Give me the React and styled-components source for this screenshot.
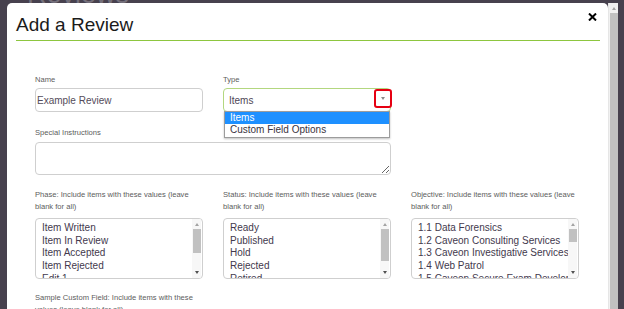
import React from "react";
import styled, { createGlobalStyle } from "styled-components";

const Global = createGlobalStyle`
  html, body { margin: 0; padding: 0; background: #47414e; }
  body { font-family: "Liberation Sans", Arial, sans-serif; }
  * { box-sizing: border-box; }
`;

const Page = styled.div`
  position: relative;
  width: 624px;
  height: 309px;
  overflow: hidden;
  background: #47414e;
`;

const BackdropTitle = styled.h1`
  margin: -21px 0 0 27px;
  font: 400 27px/30px "Liberation Sans", Arial, sans-serif;
  color: #75707b;
`;

const Overlay = styled.div`
  position: absolute;
  inset: 0;
  display: flex;
  align-items: stretch;
  padding: 3px 6px 0 7px;
`;

const Modal = styled.div`
  width: 601px;
  background: #fff;
  border-radius: 5px 5px 0 0;
`;

const PageScroll = styled.div`
  width: 10px;
  background: #f1f1f1;
  border-left: 1px solid #e6e6e6;
  display: flex;
  flex-direction: column;
  align-items: center;
`;

const ScrollBtn = styled.div`
  height: ${(p) => p.$h}px;
  width: 100%;
  display: flex;
  align-items: center;
  justify-content: center;
  flex: none;
`;

const Arrow = styled.span`
  width: 0;
  height: 0;
  border-left: 2.5px solid transparent;
  border-right: 2.5px solid transparent;
  ${(p) =>
    p.$down
      ? "border-top: 3px solid #505050;"
      : "border-bottom: 3px solid #a3a3a3;"}
`;

const Thumb = styled.div`
  width: 8px;
  background: #c1c1c1;
  flex: ${(p) => (p.$fill ? "1" : "none")};
`;

const Header = styled.div`
  margin: 0 8px 0 9px;
  padding: 11px 0 4px;
  border-bottom: 1px solid #8dc63f;
  display: flex;
  justify-content: space-between;
  align-items: flex-start;
`;

const Title = styled.h2`
  margin: 0;
  font: 400 19px/22px "Liberation Sans", Arial, sans-serif;
  color: #1b1b1b;
`;

const Close = styled.button`
  border: 0;
  background: none;
  padding: 0;
  margin: -1px 3px 0 0;
  width: 9px;
  height: 8px;
  display: block;
  svg { display: block; }
`;

const Body = styled.div`
  padding: 33px 0 0 28px;
`;

const Grid = styled.div`
  display: grid;
  grid-template-columns: repeat(3, 168px);
  column-gap: 20px;
  margin-top: ${(p) => p.$mt || 0}px;
`;

const Field = styled.div`
  position: relative;
  display: flex;
  flex-direction: column;
  grid-column: span ${(p) => p.$span || 1};
`;

const Label = styled.label`
  display: block;
  font-size: 7.6px;
  line-height: ${(p) => p.$lh || 12}px;
  color: #5c5c5c;
  margin-bottom: ${(p) => (p.$mb === undefined ? 2 : p.$mb)}px;
`;

const TextInput = styled.input`
  width: 168px;
  height: 24px;
  border: 1px solid #cfcfcf;
  border-radius: 4px;
  padding: 0 1px;
  font: 10px "Liberation Sans", Arial, sans-serif;
  color: #554c5a;
  outline: none;
`;

const SelectBox = styled.div`
  position: relative;
  height: 24px;
  border: 1px solid #b3d77f;
  border-radius: 4px;
  display: flex;
  align-items: center;
  padding-left: 5px;
  font-size: 10px;
  color: #4e4656;
`;

const Highlight = styled.div`
  position: absolute;
  top: 0;
  right: -2px;
  width: 18px;
  height: 19px;
  border: 2.6px solid #e60012;
  border-radius: 3px;
  background: #fff;
  display: flex;
  align-items: center;
  justify-content: center;
`;

const Caret = styled.span`
  width: 0;
  height: 0;
  border-left: 2px solid transparent;
  border-right: 2px solid transparent;
  border-top: 3px solid #8a8a8a;
`;

const Dropdown = styled.div`
  position: absolute;
  left: 0;
  right: 0;
  top: 100%;
  background: #fff;
  border: 1px solid #9c9c9c;
  box-shadow: 0 1px 2px rgba(0, 0, 0, 0.25);
  padding-bottom: 1px;
  z-index: 2;
`;

const Option = styled.div`
  height: 12px;
  line-height: 12px;
  font-size: 10px;
  padding-left: 5px;
  color: ${(p) => (p.$active ? "#fff" : "#3a3340")};
  background: ${(p) => (p.$active ? "#1e90ff" : "transparent")};
`;

const TextArea = styled.textarea`
  width: 356px;
  height: 33px;
  border: 1px solid #cfcfcf;
  border-radius: 4px;
  resize: both;
  outline: none;
  display: block;
`;

const ListBox = styled.div`
  width: 168px;
  height: 61px;
  border: 1px solid #cfcfcf;
  border-radius: 4px;
  display: flex;
  overflow: hidden;
`;

const ListItems = styled.div`
  flex: 1;
  min-width: 0;
  padding: 3px 0 0 6px;
  overflow: hidden;
`;

const ListItem = styled.div`
  font-size: 10px;
  line-height: 12.65px;
  white-space: nowrap;
  color: #43394d;
`;

const ListScroll = styled.div`
  width: 9px;
  margin-right: 1px;
  background: #f7f7f7;
  display: flex;
  flex-direction: column;
  align-items: center;
`;

const Spacer = styled.div`
  flex: 1;
`;

function ScrollList({ items, thumb }) {
  return (
    <ListBox>
      <ListItems>
        {items.map((t) => (
          <ListItem key={t}>{t}</ListItem>
        ))}
      </ListItems>
      <ListScroll>
        <ScrollBtn $h={10}>
          <Arrow />
        </ScrollBtn>
        <Thumb style={{ height: thumb }} />
        <Spacer />
        <ScrollBtn $h={11}>
          <Arrow $down />
        </ScrollBtn>
      </ListScroll>
    </ListBox>
  );
}

export default function App() {
  return (
    <Page>
      <Global />
      <BackdropTitle>Reviews</BackdropTitle>
      <Overlay>
        <Modal>
          <Header>
            <Title>Add a Review</Title>
            <Close aria-label="Close">
              <svg width="9" height="8" viewBox="0 0 9 8">
                <path d="M1 0.5 L8 7.5 M8 0.5 L1 7.5" stroke="#000" strokeWidth="2" />
              </svg>
            </Close>
          </Header>
          <Body>
            <Grid>
              <Field>
                <Label>Name</Label>
                <TextInput readOnly defaultValue="Example Review" />
              </Field>
              <Field>
                <Label>Type</Label>
                <SelectBox>
                  Items
                  <Highlight>
                    <Caret />
                  </Highlight>
                  <Dropdown>
                    <Option $active>Items</Option>
                    <Option>Custom Field Options</Option>
                  </Dropdown>
                </SelectBox>
              </Field>
            </Grid>
            <Grid $mt={15}>
              <Field $span={2}>
                <Label $mb={3}>Special Instructions</Label>
                <TextArea />
              </Field>
            </Grid>
            <Grid $mt={14}>
              <Field>
                <Label $lh={11.5} $mb={6}>
                  Phase: Include items with these values (leave blank for all)
                </Label>
                <ScrollList
                  thumb={24}
                  items={["Item Written", "Item In Review", "Item Accepted", "Item Rejected", "Edit 1"]}
                />
              </Field>
              <Field>
                <Label $lh={11.5} $mb={6}>
                  Status: Include items with these values (leave blank for all)
                </Label>
                <ScrollList
                  thumb={32}
                  items={["Ready", "Published", "Hold", "Rejected", "Retired"]}
                />
              </Field>
              <Field>
                <Label $lh={11.5} $mb={6}>
                  Objective: Include items with these values (leave blank for all)
                </Label>
                <ScrollList
                  thumb={13}
                  items={[
                    "1.1 Data Forensics",
                    "1.2 Caveon Consulting Services",
                    "1.3 Caveon Investigative Services",
                    "1.4 Web Patrol",
                    "1.5 Caveon Secure Exam Development",
                  ]}
                />
              </Field>
            </Grid>
            <Grid $mt={13}>
              <Field>
                <Label $lh={11.5}>
                  Sample Custom Field: Include items with these values (leave blank for all)
                </Label>
              </Field>
            </Grid>
          </Body>
        </Modal>
        <PageScroll>
          <ScrollBtn $h={10}>
            <Arrow />
          </ScrollBtn>
          <Thumb $fill />
        </PageScroll>
      </Overlay>
    </Page>
  );
}
